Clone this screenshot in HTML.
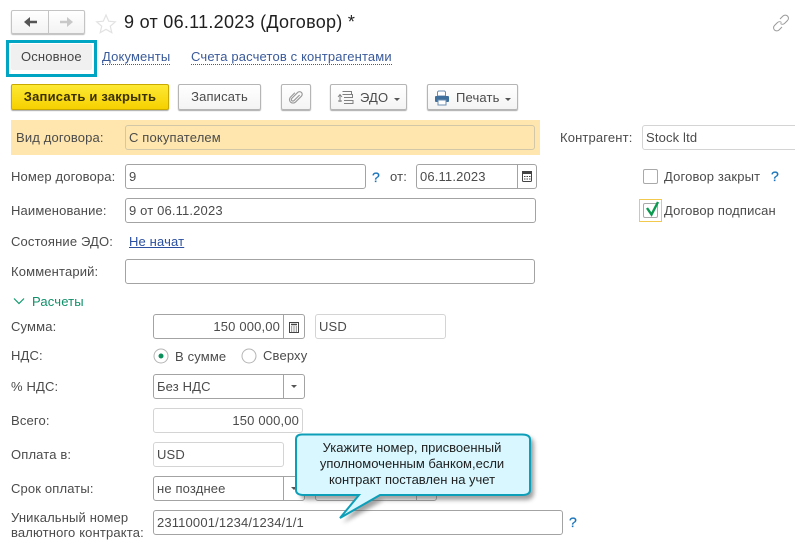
<!DOCTYPE html>
<html><head><meta charset="utf-8">
<style>
html,body{margin:0;padding:0;background:#fff}
#p{position:relative;width:795px;height:550px;overflow:hidden;background:#fff;font-family:"Liberation Sans",sans-serif;font-size:13px;color:#4b4b4b;letter-spacing:.15px}
#p div,#p a,#p svg{position:absolute;box-sizing:border-box}
.t{white-space:nowrap;line-height:14px}
.i{border:1px solid #a3a3a3;border-radius:3px;background:#fff;height:25px;line-height:23px;padding-left:3px;white-space:nowrap;color:#4b4b4b}
.l{border-color:#d4d4d4}
.r{text-align:right;padding-right:3px;padding-left:0}
.d{width:1px;background:#a3a3a3;top:0;bottom:0}
.b{border:1px solid #b5b5b5;border-radius:2px;height:26px;top:84px;background:linear-gradient(#fff,#f4f4f4);box-shadow:0 1px 1px #aaa;line-height:24px;text-align:center;white-space:nowrap}
.q{color:#1b75bb;font-size:14px;font-weight:normal;-webkit-text-stroke:.3px #1b75bb}
.lk{color:#3a5a9a}
.tri{width:0;height:0;border-left:3px solid transparent;border-right:3px solid transparent;border-top:3px solid #555}
</style></head><body>
<div id="p">
<!-- nav -->
<div style="left:11px;top:10px;width:74px;height:24px;border:1px solid #c4c4c4;border-radius:2px;background:linear-gradient(#fff,#f3f3f3);box-shadow:0 1px 1px #bbb"></div>
<div style="left:48px;top:10px;width:1px;height:24px;background:#c4c4c4"></div>
<svg style="left:11px;top:10px" width="74" height="24"><path d="M18 12h8" stroke="#555" stroke-width="2.500"/><path d="M13 12l6-5v10z" fill="#555"/><path d="M49 12h8" stroke="#c8c8c8" stroke-width="2.500"/><path d="M62 12l-6-5v10z" fill="#c8c8c8"/></svg>
<svg style="left:95px;top:13px" width="22" height="21"><path d="M11 2l2.700 6.200 6.600.6-5 4.400 1.500 6.500L11 16.300 5.200 19.700l1.500-6.500-5-4.400 6.600-.6z" fill="#fff" stroke="#e2e2e2" stroke-width="1.200"/></svg>
<div class="t" style="left:124px;top:11px;font-size:18px;line-height:22px;color:#1f1f1f;letter-spacing:.28px">9 от 06.11.2023 (Договор) *</div>
<svg style="left:772px;top:14px" width="18" height="18" fill="none" stroke="#9a9a9a" stroke-width="1"><path d="M8 5l3-3a3 3 0 0 1 4.500 4.500l-3 3a3 3 0 0 1-4 0"/><path d="M10 13l-3 3a3 3 0 0 1-4.500-4.500l3-3a3 3 0 0 1 4 0"/></svg>
<!-- tabs -->
<div style="left:6px;top:40px;width:91px;height:37px;border:3px solid #00a5c4;background:#fff"></div>
<div style="left:11px;top:44px;width:81px;height:26px;background:#f0f0f0;border-radius:2px"></div>
<div class="t" style="left:21px;top:50px;color:#444">Основное</div>
<div class="t lk" style="left:102px;top:50px;border-bottom:1px dotted #3a5a9a">Документы</div>
<div class="t lk" style="left:191px;top:50px;border-bottom:1px dotted #3a5a9a">Счета расчетов с контрагентами</div>
<!-- buttons -->
<div class="b" style="left:11px;width:158px;background:linear-gradient(#fde934,#f6d000);border-color:#c9a900;color:#3a3000;font-weight:bold;letter-spacing:.2px">Записать и закрыть</div>
<div class="b" style="left:178px;width:83px">Записать</div>
<div class="b" style="left:281px;width:30px"></div>
<svg style="left:288px;top:89px;overflow:visible" width="17" height="17" fill="none" stroke="#999" stroke-width="1.300"><g transform="rotate(45 8.500 8.500) translate(1 1) scale(.88)"><path d="M9 4v9a1.800 1.800 0 0 1-3.600 0V3.500a3 3 0 0 1 6 0V13a4 4 0 0 1-8 0V6"/></g></svg>
<div class="b" style="left:330px;width:77px"></div>
<svg style="left:337px;top:90px" width="18" height="15" fill="none" stroke="#808080" stroke-width="1"><path d="M5.500 1.500h9v3M5.500 4.500h10v2.500M7 7.500h9M7 10.500h9v3H7"/><path d="M3 5v7"/><path d="M1 7l2-2.500L5 7M1 11h4" stroke-width=".9"/></svg>
<div class="t" style="left:360px;top:91px">ЭДО</div>
<div class="tri" style="left:394px;top:98px"></div>
<div class="b" style="left:427px;width:91px"></div>
<svg style="left:434px;top:90px" width="16" height="16"><path d="M4.500 1h6l1 1v4h-8V2z" fill="#fff" stroke="#6a8db0"/><rect x="1" y="6" width="14" height="6" rx="1" fill="#3f6f9c"/><rect x="4" y="10" width="8" height="5" fill="#fff" stroke="#6a8db0"/></svg>
<div class="t" style="left:456px;top:91px">Печать</div>
<div class="tri" style="left:505px;top:98px"></div>
<!-- band -->
<div style="left:11px;top:120px;width:529px;height:35px;background:#fee6ae"></div>
<div class="t" style="left:16px;top:131px">Вид договора:</div>
<div class="i" style="left:125px;top:125px;width:410px;background:#fee6ae;border-color:#d2c8a8">С покупателем</div>
<div class="t" style="left:560px;top:131px">Контрагент:</div>
<div class="i l" style="left:642px;top:125px;width:170px">Stock ltd</div>
<!-- rows -->
<div class="t" style="left:11px;top:170px">Номер договора:</div>
<div class="i" style="left:125px;top:164px;width:241px">9</div>
<div class="t q" style="left:372px;top:170px">?</div>
<div class="t" style="left:390px;top:170px">от:</div>
<div class="i" style="left:416px;top:164px;width:121px">06.11.2023<div class="d" style="left:100px"></div></div>
<svg style="left:522px;top:171px" width="10" height="11"><rect x=".5" y=".5" width="9" height="10" rx="1" fill="#fff" stroke="#444"/><rect x="0" y="0" width="10" height="3" fill="#444"/><path d="M2 5.500h1.500M4.500 5.500h1.500M7 5.500h1.500M2 8h1.500M4.500 8h1.500M7 8h1.500" stroke="#444"/></svg>
<div style="left:643px;top:169px;width:15px;height:15px;border:1px solid #a9a9a9;border-radius:2px"></div>
<div class="t" style="left:664px;top:170px">Договор закрыт</div>
<div class="t q" style="left:771px;top:169px">?</div>
<div class="t" style="left:11px;top:204px">Наименование:</div>
<div class="i" style="left:125px;top:198px;width:411px">9 от 06.11.2023</div>
<div style="left:639px;top:199px;width:23px;height:23px;border:1px solid #f2c94c"></div>
<div style="left:643px;top:203px;width:15px;height:15px;border:1px solid #a9a9a9;border-radius:2px"></div>
<svg style="left:643px;top:200px" width="18" height="17"><path d="M4 8l4.500 6.500L15 2" fill="none" stroke="#0b9a50" stroke-width="2.400"/></svg>
<div class="t" style="left:664px;top:204px">Договор подписан</div>
<div class="t" style="left:11px;top:235px">Состояние ЭДО:</div>
<div class="t" style="left:129px;top:235px;color:#2a4fa0;text-decoration:underline">Не начат</div>
<div class="t" style="left:11px;top:265px">Комментарий:</div>
<div class="i" style="left:125px;top:259px;width:410px"></div>
<svg style="left:13px;top:297px" width="13" height="9"><path d="M1 1.500l5 5 5-5" fill="none" stroke="#0f9b6e" stroke-width="1.200"/></svg>
<div class="t" style="left:32px;top:295px;color:#0f8f68">Расчеты</div>
<div class="t" style="left:11px;top:320px">Сумма:</div>
<div class="i r" style="left:153px;top:314px;width:152px;padding-right:24px">150 000,00<div class="d" style="left:129px"></div></div>
<svg style="left:289px;top:322px" width="10" height="11"><rect x=".5" y=".5" width="9" height="10" fill="#fff" stroke="#444"/><path d="M2 2.500h6" stroke="#444" stroke-width="1.500"/><path d="M2 5h1.200M4.400 5h1.200M6.800 5h1.200M2 7h1.200M4.400 7h1.200M6.800 7h1.200M2 9h1.200M4.400 9h1.200M6.800 9h1.200" stroke="#444"/></svg>
<div class="i l" style="left:315px;top:314px;width:131px">USD</div>
<div class="t" style="left:11px;top:349px">НДС:</div>
<svg style="left:153px;top:348px" width="16" height="16"><circle cx="8" cy="8" r="7" fill="#fff" stroke="#b5b5b5"/><circle cx="8" cy="8" r="2.500" fill="#0a8f5a"/></svg>
<div class="t" style="left:175px;top:350px">В сумме</div>
<svg style="left:241px;top:348px" width="16" height="16"><circle cx="8" cy="8" r="7" fill="#fff" stroke="#b5b5b5"/></svg>
<div class="t" style="left:263px;top:349px">Сверху</div>
<div class="t" style="left:11px;top:380px">% НДС:</div>
<div class="i" style="left:153px;top:374px;width:152px">Без НДС<div class="d" style="left:129px"></div></div>
<div class="tri" style="left:291px;top:385px"></div>
<div class="t" style="left:11px;top:414px">Всего:</div>
<div class="i l r" style="left:153px;top:408px;width:150px">150 000,00</div>
<div class="t" style="left:11px;top:448px">Оплата в:</div>
<div class="i l" style="left:153px;top:442px;width:131px">USD</div>
<div class="t" style="left:11px;top:482px">Срок оплаты:</div>
<div class="i" style="left:153px;top:476px;width:152px">не позднее<div class="d" style="left:129px"></div></div>
<div class="tri" style="left:291px;top:487px"></div>
<div class="i" style="left:315px;top:476px;width:122px"><div class="d" style="left:100px"></div></div>
<div class="t" style="left:11px;top:511px">Уникальный номер</div>
<div class="t" style="left:11px;top:526px">валютного контракта:</div>
<div class="i" style="left:153px;top:510px;width:410px">23110001/1234/1234/1/1</div>
<div class="t q" style="left:569px;top:515px">?</div>
<!-- callout -->
<svg style="left:290px;top:428px" width="255" height="100">
<defs><filter id="s" x="-10%" y="-10%" width="125%" height="130%"><feGaussianBlur stdDeviation="2"/></filter></defs>
<path d="M12 5H232q8 0 8 8V60q0 8-8 8H90L49 91 69 68H14q-8 0-8-8V13q0-8 6-8z" fill="#555" opacity=".55" filter="url(#s)" transform="translate(4,4)"/>
<path d="M12 6.500H232q8 0 8 5V62q0 5-8 5H90L50 90 69 67H14q-8 0-8-5V11.500q0-5 6-5z" fill="#d8f7ff" stroke="#0e9fb8" stroke-width="2"/>
</svg>
<div class="t" style="left:295px;top:440px;width:234px;text-align:center;line-height:16px;color:#1f1f1f;white-space:normal;letter-spacing:0">Укажите номер, присвоенный<br>уполномоченным банком,если<br>контракт поставлен на учет</div>
</div>
</body></html>
